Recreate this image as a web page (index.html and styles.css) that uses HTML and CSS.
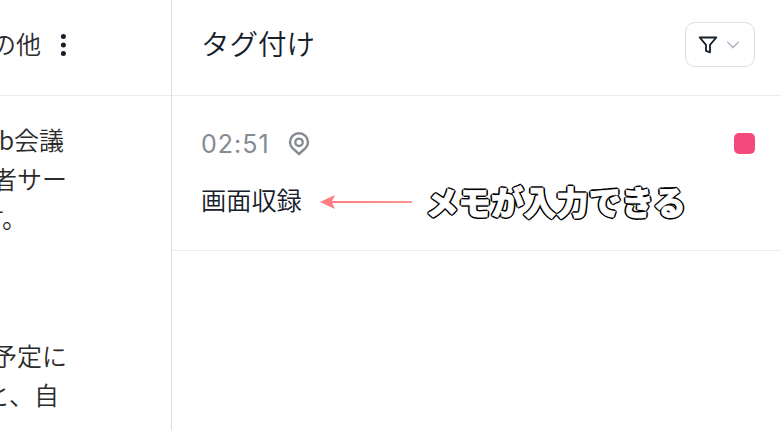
FILE: index.html
```html
<!DOCTYPE html>
<html lang="ja">
<head>
    <meta charset="UTF-8">
    <meta name="viewport" content="width=device-width, initial-scale=1.0">
    <title>タグ付け</title>
    <link rel="stylesheet" href="styles.css">
</head>
<body>
    <div class="container">
        <div class="sidebar">
            <div class="sidebar-header">
                <span class="sidebar-title">の他</span>
                <svg class="more" width="10" height="24" viewBox="0 0 10 24" fill="#15202b">
                    <circle cx="5.4" cy="3.4" r="2.5"/>
                    <circle cx="5.4" cy="12" r="2.5"/>
                    <circle cx="5.4" cy="20.5" r="2.5"/>
                </svg>
            </div>
            <div class="transcript">
                <p class="line-a">b会議</p>
                <p class="line-b">者サー</p>
                <p class="line-c">す。</p>
            </div>
            <div class="transcript">
                <p class="line-d">予定に</p>
                <p class="line-e">と、自</p>
            </div>
        </div>
        <div class="main">
            <div class="main-header">
                <h2>タグ付け</h2>
                <button class="filter-button">
                    <svg width="20" height="20" viewBox="0 0 20 20" fill="none" stroke="#15202b" stroke-width="1.8" stroke-linejoin="round">
                        <path d="M1.7 2.5H18.3L12 9.8V17.3L8 15.8V9.8Z"/>
                    </svg>
                    <svg width="14" height="10" viewBox="0 0 14 10" fill="none" stroke="#b4bac4" stroke-width="1.6" stroke-linecap="round" stroke-linejoin="round">
                        <path d="M1.8 2.2L7 7.6L12.2 2.2"/>
                    </svg>
                </button>
            </div>
            <div class="tag-item">
                <div class="tag-info">
                    <span class="time">02:51</span>
                    <svg width="22" height="24" viewBox="0 0 22 24" fill="none" stroke="#858b92" stroke-width="2.4" stroke-linejoin="round">
                        <path d="M11 22L4.3 15.8A8.7 8.7 0 0 1 2 10.2A9 9 0 0 1 20 10.2A8.7 8.7 0 0 1 17.7 15.8Z"/>
                        <circle cx="11" cy="10.3" r="3.7"/>
                    </svg>
                    <span class="tag-color"></span>
                </div>
                <div class="memo">
                    <span class="memo-text">画面収録</span>
                    <svg class="arrow" width="92" height="14" viewBox="0 0 92 14">
                        <defs>
                            <linearGradient id="fade" gradientUnits="userSpaceOnUse" x1="0" y1="0" x2="92" y2="0">
                                <stop offset="0" stop-color="#ff7b7f"/>
                                <stop offset="1" stop-color="#ff9492"/>
                            </linearGradient>
                        </defs>
                        <path d="M0 7L15 0L12.2 6H92V8H12.2L15 14Z" fill="url(#fade)"/>
                    </svg>
                    <span class="note">メモが入力できる</span>
                </div>
            </div>
        </div>
    </div>
</body>
</html>
```
FILE: styles.css
```css
* {
    box-sizing: border-box;
}
body {
    margin: 0;
    height: 430px;
    overflow: hidden;
    background-color: white;
    color: #15202b;
    font-family: 'Noto Sans CJK JP', sans-serif;
}
.container {
    display: flex;
    height: 430px;
}
.sidebar {
    width: 172px;
    flex-shrink: 0;
    overflow: hidden;
    border-right: 1px solid #dcdddf;
    color: #2b2b2b;
    font-size: 25px;
    font-weight: 350;
}
.sidebar-header {
    display: flex;
    align-items: center;
    justify-content: flex-end;
    height: 96px;
    padding: 0 103px 6px 0;
    border-bottom: 1px solid #ebebec;
}
.sidebar-title {
    white-space: nowrap;
    margin: -3px 17px 0 0;
}
.more {
    flex-shrink: 0;
}
.transcript {
    padding-top: 24px;
    margin-bottom: 75px;
}
.transcript p {
    display: flex;
    justify-content: flex-end;
    margin: 0;
    line-height: 39px;
    white-space: nowrap;
}
.transcript .line-a {
    padding-right: 107px;
}
.transcript .line-b {
    padding-right: 104px;
}
.transcript .line-c {
    padding-right: 144px;
}
.transcript .line-d {
    padding-right: 104px;
}
.transcript .line-e {
    padding-right: 112px;
}
.main {
    flex: 1;
}
.main-header {
    display: flex;
    align-items: center;
    justify-content: space-between;
    height: 96px;
    padding: 0 26px 7px 29px;
    border-bottom: 1px solid #ebebec;
}
h2 {
    margin: -4px 0 0;
    font-size: 28.5px;
    font-weight: 350;
}
.filter-button {
    display: flex;
    align-items: center;
    gap: 8px;
    width: 70px;
    height: 45px;
    padding: 1px 0 0 12px;
    border: 1px solid #dcdde6;
    border-radius: 10px;
    background: white;
}
.tag-item {
    height: 155px;
    padding: 35px 26px 0 29px;
    border-bottom: 1px solid #ebebec;
}
.tag-info {
    display: flex;
    align-items: center;
    height: 25px;
}
.time {
    width: 87px;
    margin-top: 1px;
    color: #858b92;
    font-family: 'Inter', sans-serif;
    font-size: 25px;
    font-weight: 400;
    letter-spacing: 1px;
}
.tag-color {
    width: 21px;
    height: 21px;
    margin-left: auto;
    border-radius: 5px;
    background-color: #f34a7b;
}
.memo {
    display: flex;
    align-items: center;
    height: 36px;
    margin-top: 27px;
    white-space: nowrap;
}
.memo-text {
    margin-top: -5px;
    font-size: 25.2px;
    font-weight: 350;
}
.arrow {
    margin: 2px 14px 0 18px;
}
.note {
    margin-top: -2px;
    color: white;
    font-size: 32.6px;
    font-weight: 900;
    -webkit-text-stroke: 0.8px white;
    text-shadow: 2px 0 black, -2px 0 black, 0 2px black, 0 -2px black,
        1.4px 1.4px black, -1.4px 1.4px black, 1.4px -1.4px black, -1.4px -1.4px black;
}
```
